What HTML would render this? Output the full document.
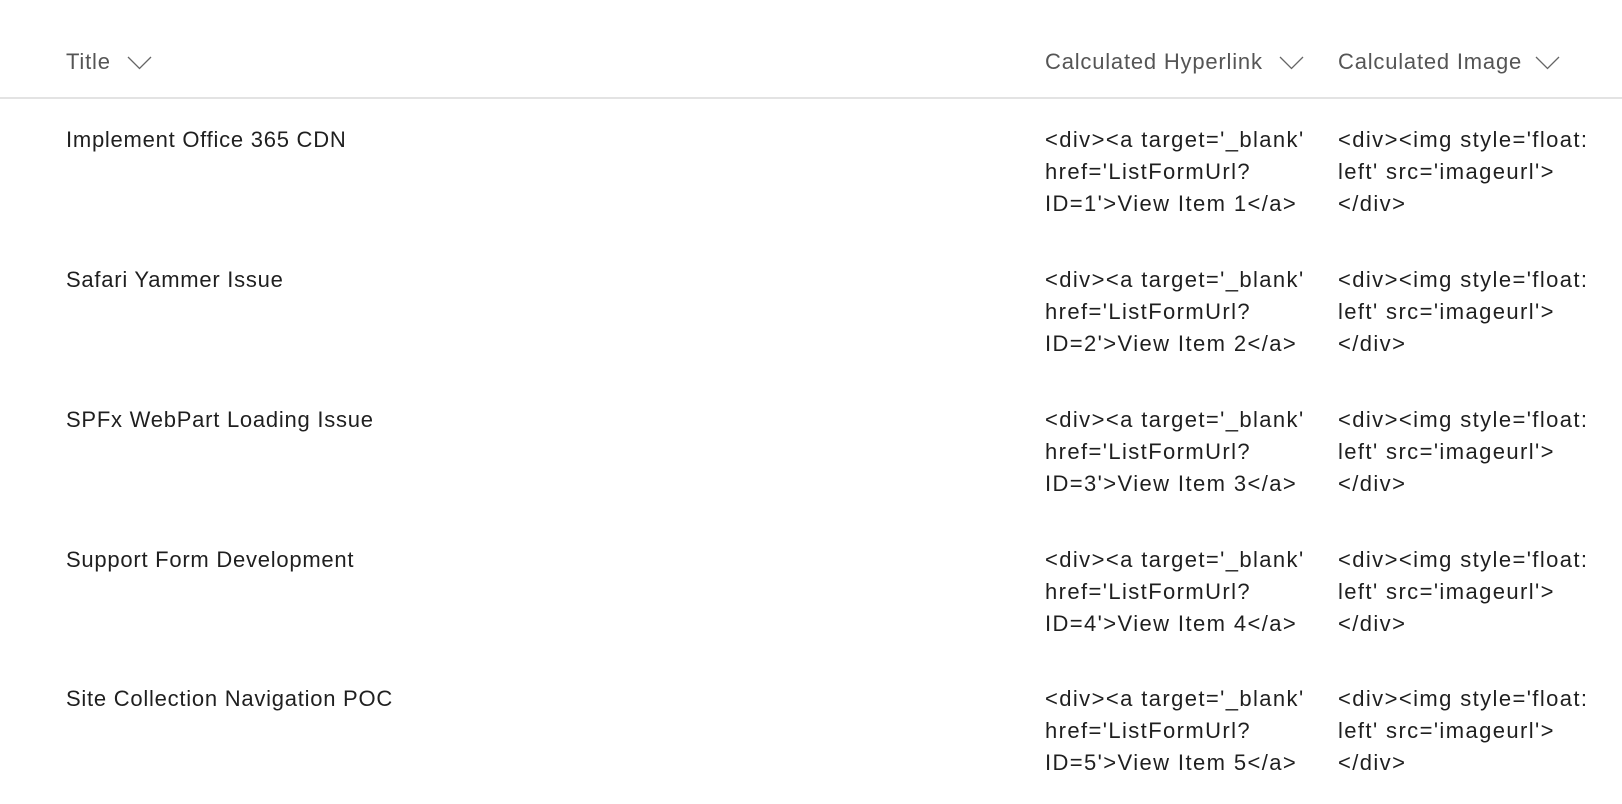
<!DOCTYPE html>
<html><head><style>
body{margin:0;width:1622px;height:804px;background:#fff;font-family:"Liberation Sans",sans-serif;overflow:hidden;position:relative;color:#1f1f1f}
.h{position:absolute;top:49px;font-size:22px;letter-spacing:0.8px;color:#555;line-height:26px;white-space:nowrap}
.chev{position:absolute;top:56px}
.line{position:absolute;left:0;width:1622px;top:97px;height:2px;background:#e3e3e3}
.c{position:absolute;font-size:22px;letter-spacing:1.4px;line-height:32px;white-space:nowrap}
.t{letter-spacing:0.75px}
.img{width:250px;overflow:hidden}
</style></head><body>
<div class="h" style="left:66px">Title</div>
<svg class="chev" style="left:127px" width="25" height="14" viewBox="0 0 25 14"><path d="M1 1 L12.5 12.5 L24 1" fill="none" stroke="#666" stroke-width="1.3"/></svg>
<div class="h" style="left:1045px">Calculated Hyperlink</div>
<svg class="chev" style="left:1279px" width="25" height="14" viewBox="0 0 25 14"><path d="M1 1 L12.5 12.5 L24 1" fill="none" stroke="#666" stroke-width="1.3"/></svg>
<div class="h" style="left:1338px">Calculated Image</div>
<svg class="chev" style="left:1535px" width="25" height="14" viewBox="0 0 25 14"><path d="M1 1 L12.5 12.5 L24 1" fill="none" stroke="#666" stroke-width="1.3"/></svg>
<div class="line"></div>

<div class="c t" style="left:66px;top:124px">Implement Office 365 CDN</div>
<div class="c" style="left:1045px;top:124px">&lt;div&gt;&lt;a target='_blank'<br>href='ListFormUrl?<br>ID=1'&gt;View Item 1&lt;/a&gt;</div>
<div class="c img" style="left:1338px;top:124px">&lt;div&gt;&lt;img style='float:<br>left' src='imageurl'&gt;<br>&lt;/div&gt;</div>

<div class="c t" style="left:66px;top:264px">Safari Yammer Issue</div>
<div class="c" style="left:1045px;top:264px">&lt;div&gt;&lt;a target='_blank'<br>href='ListFormUrl?<br>ID=2'&gt;View Item 2&lt;/a&gt;</div>
<div class="c img" style="left:1338px;top:264px">&lt;div&gt;&lt;img style='float:<br>left' src='imageurl'&gt;<br>&lt;/div&gt;</div>

<div class="c t" style="left:66px;top:404px">SPFx WebPart Loading Issue</div>
<div class="c" style="left:1045px;top:404px">&lt;div&gt;&lt;a target='_blank'<br>href='ListFormUrl?<br>ID=3'&gt;View Item 3&lt;/a&gt;</div>
<div class="c img" style="left:1338px;top:404px">&lt;div&gt;&lt;img style='float:<br>left' src='imageurl'&gt;<br>&lt;/div&gt;</div>

<div class="c t" style="left:66px;top:544px">Support Form Development</div>
<div class="c" style="left:1045px;top:544px">&lt;div&gt;&lt;a target='_blank'<br>href='ListFormUrl?<br>ID=4'&gt;View Item 4&lt;/a&gt;</div>
<div class="c img" style="left:1338px;top:544px">&lt;div&gt;&lt;img style='float:<br>left' src='imageurl'&gt;<br>&lt;/div&gt;</div>

<div class="c t" style="left:66px;top:683px">Site Collection Navigation POC</div>
<div class="c" style="left:1045px;top:683px">&lt;div&gt;&lt;a target='_blank'<br>href='ListFormUrl?<br>ID=5'&gt;View Item 5&lt;/a&gt;</div>
<div class="c img" style="left:1338px;top:683px">&lt;div&gt;&lt;img style='float:<br>left' src='imageurl'&gt;<br>&lt;/div&gt;</div>
</body></html>
